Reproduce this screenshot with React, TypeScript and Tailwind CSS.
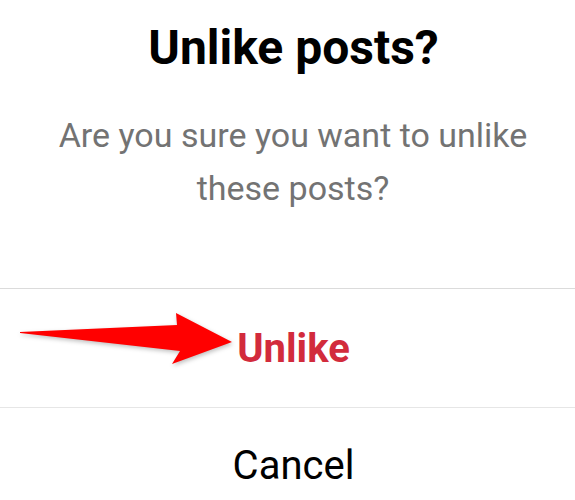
export default function App() {
  return (
    <div className="w-[575px] h-[500px] bg-white overflow-hidden font-['Roboto',sans-serif] text-center">
      <div className="pt-[20px] pb-[73px]">
        <h1 className="pl-[12px] text-[48px] leading-[56px] font-bold text-black">Unlike posts?</h1>
        <p className="mt-[33px] pl-[40px] pr-[29px] text-[34px] leading-[53px] text-[#737373]">
          Are you sure you want to unlike these posts?
        </p>
      </div>

      <div className="border-t border-[#dbdbdb] relative h-[119px] pl-[12px] flex items-center justify-center">
        <span className="text-[40px] leading-[47px] font-bold text-[#d22b3c]">Unlike</span>
        <svg
          className="absolute left-0 top-0"
          width="240"
          height="90"
          viewBox="0 0 240 90"
          style={{ filter: 'drop-shadow(1px 2px 2px rgba(0,0,0,0.25))' }}
        >
          <polygon points="20,43 177,36 176,24 232,53 172,75 180,62 20,44" fill="#ff0000" />
        </svg>
      </div>

      <div className="border-t border-[#e6e6e6] h-[115px] pl-[12px] flex items-center justify-center">
        <span className="text-[40px] leading-[47px] text-black">Cancel</span>
      </div>
    </div>
  );
}
